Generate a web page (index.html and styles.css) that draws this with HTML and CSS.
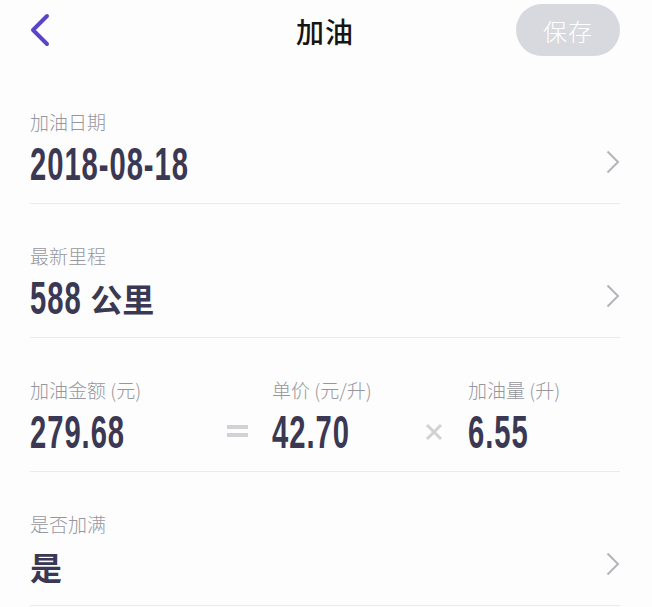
FILE: index.html
```html
<!DOCTYPE html>
<html lang="zh-CN">
<head>
  <meta charset="UTF-8" />
  <meta name="viewport" content="width=device-width, initial-scale=1.0" />
  <title>加油</title>
  <link rel="stylesheet" href="styles.css">
</head>
<body>
  <div class="page">
    <header class="top-bar">
      <a class="back" href="#">
        <svg width="20" height="34" viewBox="0 0 20 34">
          <polyline points="17,3 3,17 17,31" fill="none" stroke="#5b44c9" stroke-width="4" stroke-linecap="round" stroke-linejoin="round" />
        </svg>
      </a>
      <h1 class="title">加油</h1>
      <button class="save" type="button">保存</button>
    </header>

    <div class="row">
      <div class="field">
        <div class="label">加油日期</div>
        <div class="value"><span class="num">2018-08-18</span></div>
      </div>
      <svg class="arrow" width="14" height="24" viewBox="0 0 14 24">
        <polyline points="1.5,1.5 12,12 1.5,22.5" fill="none" stroke="#b4b4b9" stroke-width="2" />
      </svg>
    </div>

    <div class="row">
      <div class="field">
        <div class="label">最新里程</div>
        <div class="value"><span class="num">588</span><span class="unit">公里</span></div>
      </div>
      <svg class="arrow" width="14" height="24" viewBox="0 0 14 24">
        <polyline points="1.5,1.5 12,12 1.5,22.5" fill="none" stroke="#b4b4b9" stroke-width="2" />
      </svg>
    </div>

    <div class="row calc">
      <div class="field col-amount">
        <div class="label">加油金额 (元)</div>
        <div class="value"><span class="num">279.68</span></div>
      </div>
      <span class="op op-eq"></span>
      <div class="field col-price">
        <div class="label">单价 (元/升)</div>
        <div class="value"><span class="num">42.70</span></div>
      </div>
      <svg class="op op-times" width="18" height="18" viewBox="0 0 18 18">
        <path d="M2 2 L16 16 M16 2 L2 16" stroke="#d2d2d6" stroke-width="3" />
      </svg>
      <div class="field col-volume">
        <div class="label">加油量 (升)</div>
        <div class="value"><span class="num">6.55</span></div>
      </div>
    </div>

    <div class="row">
      <div class="field">
        <div class="label">是否加满</div>
        <div class="value"><span class="cn">是</span></div>
      </div>
      <svg class="arrow" width="14" height="24" viewBox="0 0 14 24">
        <polyline points="1.5,1.5 12,12 1.5,22.5" fill="none" stroke="#b4b4b9" stroke-width="2" />
      </svg>
    </div>
  </div>
</body>
</html>
```

FILE: styles.css
```css
body {
  margin: 0;
  background: #fdfdfd;
  font-family: 'Noto Sans CJK SC', 'Noto Sans', sans-serif;
  color: #3a3852;
}

.page {
  padding: 0 32px 0 30px;
}

.top-bar {
  height: 62px;
  display: flex;
  align-items: center;
  justify-content: space-between;
}

.back {
  display: flex;
  width: 104px;
  margin-top: -2px;
}

.title {
  margin: 0;
  font-size: 28px;
  font-weight: 500;
  color: #151515;
  letter-spacing: 1px;
}

.save {
  width: 104px;
  height: 52px;
  margin-top: -2px;
  border: none;
  border-radius: 26px;
  background: #d8d8df;
  color: #fff;
  font-family: inherit;
  font-size: 24px;
  font-weight: 300;
  letter-spacing: 1px;
}

/* each row: label over value, divider at the bottom */
.row {
  height: 133px;
  border-bottom: 1px solid #ebebee;
  display: flex;
  align-items: flex-end;
}

.row:first-of-type {
  height: 141px;
}

.field {
  flex: 1;
  padding-bottom: 15px;
}

.label {
  font-size: 19px;
  font-weight: 300;
  line-height: 26px;
  color: #96969e;
}

.value {
  height: 48px;
  display: flex;
  align-items: center;
  margin-top: 5px;
}

.num {
  display: inline-block;
  font-family: 'Liberation Sans Narrow', 'Liberation Sans', sans-serif;
  font-weight: 700;
  font-size: 46px;
  line-height: 48px;
  letter-spacing: 1.5px;
  transform: scaleX(0.635);
  transform-origin: left center;
}

.unit,
.cn {
  font-size: 32px;
  font-weight: 700;
  line-height: 48px;
}

.unit {
  margin-left: -21px;
  font-weight: 600;
}

.arrow {
  margin-bottom: 29px;
  flex: none;
}

.calc .field {
  flex: none;
}

.col-amount {
  width: 197px;
}

.col-price {
  width: 153px;
}

.op {
  flex: none;
  align-self: flex-end;
}

.op-eq {
  width: 21px;
  height: 4px;
  border-top: 4px solid #d2d2d6;
  border-bottom: 4px solid #d2d2d6;
  margin: 0 24px 34px 0;
}

.op-times {
  margin: 0 25px 30px 0;
}
```
